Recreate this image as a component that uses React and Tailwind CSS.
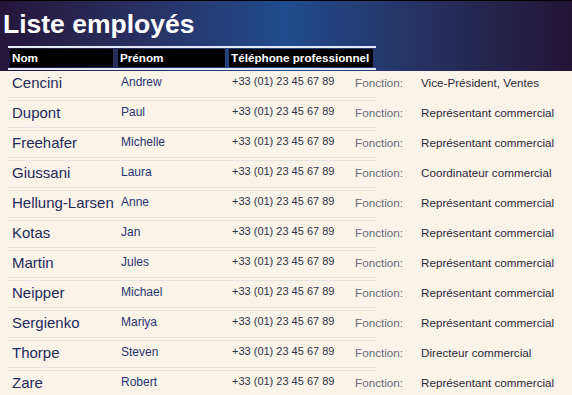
import React from 'react';

const employees = [
  { nom: 'Cencini', prenom: 'Andrew', fonction: 'Vice-Président, Ventes' },
  { nom: 'Dupont', prenom: 'Paul', fonction: 'Représentant commercial' },
  { nom: 'Freehafer', prenom: 'Michelle', fonction: 'Représentant commercial' },
  { nom: 'Giussani', prenom: 'Laura', fonction: 'Coordinateur commercial' },
  { nom: 'Hellung-Larsen', prenom: 'Anne', fonction: 'Représentant commercial' },
  { nom: 'Kotas', prenom: 'Jan', fonction: 'Représentant commercial' },
  { nom: 'Martin', prenom: 'Jules', fonction: 'Représentant commercial' },
  { nom: 'Neipper', prenom: 'Michael', fonction: 'Représentant commercial' },
  { nom: 'Sergienko', prenom: 'Mariya', fonction: 'Représentant commercial' },
  { nom: 'Thorpe', prenom: 'Steven', fonction: 'Directeur commercial' },
  { nom: 'Zare', prenom: 'Robert', fonction: 'Représentant commercial' },
];

const PHONE = '+33 (01) 23 45 67 89';

const App = () => {
  return (
    <div
      className="w-[572px] h-[395px] overflow-hidden bg-[#faf3e8]"
      style={{ fontFamily: '"Liberation Sans", Arial, sans-serif' }}
    >
      {/* header band */}
      <div className="h-[71px] bg-gradient-to-r from-[#25163a] via-[#1f4c8f] to-[#221535]">
        <div className="h-[46px] border-t border-black pl-[3px] pt-[8px]">
          <h1 className="text-[26.5px] leading-[30px] font-bold text-white whitespace-nowrap">Liste employés</h1>
        </div>
        <div className="ml-[8px] w-[368px] border-y-2 border-[#e3e9f6] py-[1px]">
          <div className="flex h-[18px] text-[11.7px] leading-[15px] font-bold text-white whitespace-nowrap">
            <div className="ml-[2px] w-[103px] bg-black pl-[2px] pt-[1px]">Nom</div>
            <div className="ml-[5px] w-[107px] bg-black pl-[2px] pt-[1px]">Prénom</div>
            <div className="ml-[4px] w-[144px] bg-black pl-[2px] pt-[1px] overflow-hidden">Téléphone professionnel</div>
          </div>
        </div>
      </div>

      {/* rows */}
      <div>
        {employees.map((e) => (
          <div key={e.nom} className="h-[30px] flex flex-col">
            <div className="flex h-[26px] whitespace-nowrap">
              <div className="w-[121px] pl-[12px] pt-[3px] text-[15px] leading-[18px] text-[#1f2a5c]">{e.nom}</div>
              <div className="w-[111px] pt-[4px] text-[12px] leading-[14px] text-[#283571]">{e.prenom}</div>
              <div className="w-[123px] pt-[4px] text-[11px] leading-[13px] text-[#2f3348]">{PHONE}</div>
              <div className="w-[66px] pt-[5px] text-[11.7px] leading-[14px] text-[#6c6a7a]">Fonction:</div>
              <div className="pt-[5px] text-[11.7px] leading-[14px] text-[#2c2838]">{e.fonction}</div>
            </div>
            <div className="ml-[8px] w-[368px] h-[4px] border-y border-[#e6e4e1]"></div>
          </div>
        ))}
      </div>
    </div>
  );
};

export default App;
